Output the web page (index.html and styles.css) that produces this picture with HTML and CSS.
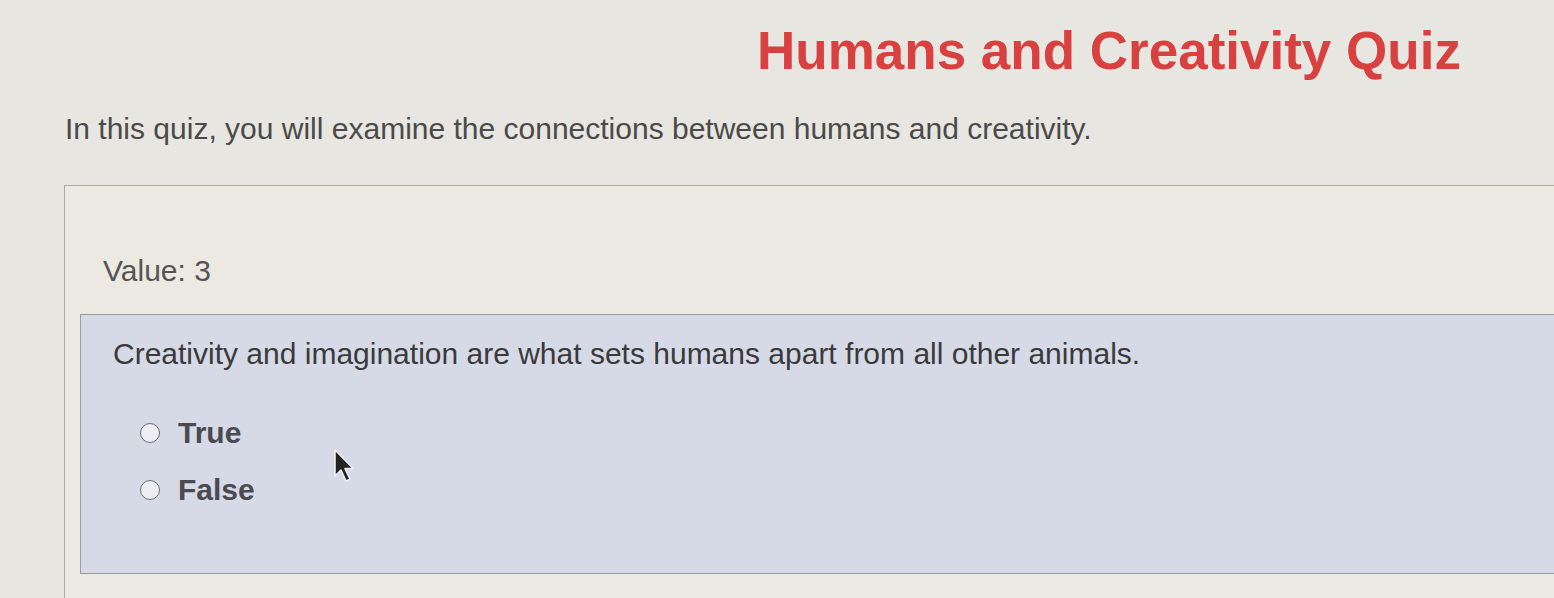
FILE: index.html
```html
<!DOCTYPE html>
<html lang="en">
<head>
<meta charset="utf-8">
<title>Humans and Creativity Quiz</title>
<link rel="stylesheet" href="styles.css">
</head>
<body>
<div class="page">
  <h1 class="title">Humans and Creativity Quiz</h1>
  <p class="intro">In this quiz, you will examine the connections between humans and creativity.</p>
  <div class="quiz-box">
    <div class="value">Value: 3</div>
    <div class="question">
      <p class="question-text">Creativity and imagination are what sets humans apart from all other animals.</p>
      <label class="option"><span class="radio"></span><span class="option-label">True</span></label>
      <label class="option"><span class="radio"></span><span class="option-label">False</span></label>
    </div>
  </div>
  <svg class="cursor" width="26" height="36" viewBox="0 0 13 18" aria-hidden="true">
    <path d="M1 1 L1 14 L4 11 L6.5 16.5 L8.5 15.6 L6 10.3 L10.2 10.3 Z" fill="#222" stroke="#eee" stroke-width="0.8" stroke-linejoin="round"/>
  </svg>
</div>
</body>
</html>
```
FILE: styles.css
```css
html, body {
  margin: 0;
  padding: 0;
  overflow: hidden;
}
body {
  background: #e7e6e0;
  font-family: "Liberation Sans", Arial, sans-serif;
  color: #444;
}
.page {
  position: relative;
  height: 598px;
}
.title {
  margin: 0;
  padding: 21px 0 0 757px;
  font-size: 53px;
  line-height: 60px;
  font-weight: bold;
  color: #d8413f;
  white-space: nowrap;
}
.intro {
  margin: 30px 0 0 65px;
  font-size: 30px;
  line-height: 36px;
  color: #4a4a4a;
  white-space: nowrap;
}
.quiz-box {
  margin: 38px -20px 0 64px;
  border: 1.5px solid #a9a8a4;
  border-bottom: none;
  background: #ebe9e2;
  padding: 68px 0 40px 15px;
}
.value {
  margin-left: 23px;
  font-size: 30px;
  line-height: 34px;
  color: #555;
}
.question {
  margin-top: 26px;
  background: #d6d9e6;
  border: 1.5px solid #9c9ca4;
  border-right: none;
  padding: 22px 0 66px 32px;
}
.question-text {
  margin: 0;
  font-size: 30px;
  line-height: 34px;
  color: #3a3a3a;
  white-space: nowrap;
}
.option {
  display: flex;
  align-items: center;
  gap: 18px;
  margin-left: 27px;
  height: 34px;
}
.question-text + .option {
  margin-top: 45px;
}
.option + .option {
  margin-top: 23px;
}
.radio {
  width: 18px;
  height: 18px;
  border: 1.5px solid #6e6e72;
  border-radius: 50%;
  background: #eeeef2;
  flex: none;
}
.option-label {
  font-size: 30px;
  font-weight: bold;
  color: #4a4a50;
}
.cursor {
  position: absolute;
  left: 333px;
  top: 448px;
}
```
